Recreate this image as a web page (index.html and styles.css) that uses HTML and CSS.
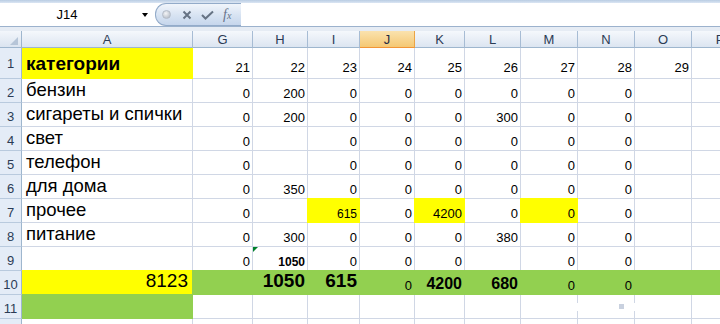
FILE: index.html
```html
<!DOCTYPE html>
<html lang="ru">
<head>
    <meta charset="UTF-8">
    <title>Расходы</title>
    <link rel="stylesheet" href="styles.css">
</head>
<body>
    <div class="topedge"></div>
    <div class="fbar">
        <div class="namebox">
            <span class="ref">J14</span>
            <span class="drop"></span>
        </div>
        <div class="fbtns">
            <span class="dot"></span>
            <svg class="ico" width="10" height="10" viewBox="0 0 10 10"><path d="M1.5 1.5L8.5 8.5M8.5 1.5L1.5 8.5"/></svg>
            <svg class="ico" width="13" height="10" viewBox="0 0 13 10"><path d="M1 5L4.5 8.5L12 1.5"/></svg>
            <span class="fx">f<span>x</span></span>
        </div>
        <div class="finput"></div>
    </div>
    <div class="fgap"></div>

    <div class="sheet">
        <div class="row head">
            <div class="corner"></div>
            <div class="ch">A</div>
            <div class="ch">G</div>
            <div class="ch">H</div>
            <div class="ch">I</div>
            <div class="ch sel">J</div>
            <div class="ch">K</div>
            <div class="ch">L</div>
            <div class="ch">M</div>
            <div class="ch">N</div>
            <div class="ch">O</div>
            <div class="ch">P</div>
        </div>

        <div class="row r1">
            <div class="rh">1</div>
            <div class="c a t b fill yel">категории</div>
            <div class="c">21</div><div class="c">22</div><div class="c">23</div><div class="c">24</div>
            <div class="c">25</div><div class="c">26</div><div class="c">27</div><div class="c">28</div>
            <div class="c">29</div><div class="c"></div>
        </div>

        <div class="row">
            <div class="rh">2</div>
            <div class="c a t">бензин</div>
            <div class="c">0</div><div class="c">200</div><div class="c">0</div><div class="c">0</div>
            <div class="c">0</div><div class="c">0</div><div class="c">0</div><div class="c">0</div>
            <div class="c"></div><div class="c"></div>
        </div>

        <div class="row">
            <div class="rh">3</div>
            <div class="c a t">сигареты и спички</div>
            <div class="c">0</div><div class="c">200</div><div class="c">0</div><div class="c">0</div>
            <div class="c">0</div><div class="c">300</div><div class="c">0</div><div class="c">0</div>
            <div class="c"></div><div class="c"></div>
        </div>

        <div class="row">
            <div class="rh">4</div>
            <div class="c a t">свет</div>
            <div class="c">0</div><div class="c"></div><div class="c">0</div><div class="c">0</div>
            <div class="c">0</div><div class="c">0</div><div class="c">0</div><div class="c">0</div>
            <div class="c"></div><div class="c"></div>
        </div>

        <div class="row">
            <div class="rh">5</div>
            <div class="c a t">телефон</div>
            <div class="c">0</div><div class="c"></div><div class="c">0</div><div class="c">0</div>
            <div class="c">0</div><div class="c">0</div><div class="c">0</div><div class="c">0</div>
            <div class="c"></div><div class="c"></div>
        </div>

        <div class="row">
            <div class="rh">6</div>
            <div class="c a t">для дома</div>
            <div class="c">0</div><div class="c">350</div><div class="c">0</div><div class="c">0</div>
            <div class="c">0</div><div class="c">0</div><div class="c">0</div><div class="c">0</div>
            <div class="c"></div><div class="c"></div>
        </div>

        <div class="row">
            <div class="rh">7</div>
            <div class="c a t">прочее</div>
            <div class="c">0</div><div class="c"></div><div class="c sm fill yel">615</div><div class="c">0</div>
            <div class="c fill yel">4200</div><div class="c">0</div><div class="c fill yel">0</div><div class="c">0</div>
            <div class="c"></div><div class="c"></div>
        </div>

        <div class="row">
            <div class="rh">8</div>
            <div class="c a t">питание</div>
            <div class="c">0</div><div class="c">300</div><div class="c">0</div><div class="c">0</div>
            <div class="c">0</div><div class="c">380</div><div class="c">0</div><div class="c">0</div>
            <div class="c"></div><div class="c"></div>
        </div>

        <div class="row">
            <div class="rh">9</div>
            <div class="c a t"></div>
            <div class="c">0</div><div class="c sm b flag">1050</div><div class="c">0</div><div class="c">0</div>
            <div class="c">0</div><div class="c"></div><div class="c">0</div><div class="c">0</div>
            <div class="c"></div><div class="c"></div>
        </div>

        <div class="row">
            <div class="rh">10</div>
            <div class="c a big fill yel">8123</div>
            <div class="c fill grn"></div><div class="c big b fill grn">1050</div><div class="c big b fill grn">615</div><div class="c fill grn">0</div>
            <div class="c mid b fill grn">4200</div><div class="c mid b fill grn">680</div><div class="c fill grn">0</div><div class="c fill grn">0</div>
            <div class="c fill grn"></div><div class="c fill grn"></div>
        </div>

        <div class="row">
            <div class="rh">11</div>
            <div class="c a fill grn"></div>
            <div class="c"></div><div class="c"></div><div class="c"></div><div class="c"></div>
            <div class="c"></div><div class="c"></div><div class="c"></div><div class="c"></div>
            <div class="c"></div><div class="c"></div>
        </div>

        <div class="row">
            <div class="rh"></div>
            <div class="c a"></div>
            <div class="c"></div><div class="c"></div><div class="c"></div><div class="c"></div>
            <div class="c"></div><div class="c"></div><div class="c"></div><div class="c"></div>
            <div class="c"></div><div class="c"></div>
        </div>
    </div>

    <div class="handle"><span></span></div>
</body>
</html>
```

FILE: styles.css
```css
body {
    margin: 0;
    width: 720px;
    height: 324px;
    overflow: hidden;
    position: relative;
    background: #fff;
    font-family: "Liberation Sans", Arial, sans-serif;
    color: #000;
}

/* formula bar */
.topedge {
    height: 3px;
    background: linear-gradient(#b9cce3, #dbe6f3);
}
.fbar {
    display: flex;
    height: 23px;
    background: #fff;
    border-bottom: 1px solid #9cb2cd;
}
.namebox {
    display: flex;
    align-items: center;
    width: 155px;
}
.ref {
    width: 134px;
    text-align: center;
    font-size: 13px;
}
.drop {
    margin-left: 8px;
    width: 0;
    height: 0;
    border-left: 3.5px solid transparent;
    border-right: 3.5px solid transparent;
    border-top: 4px solid #000;
    margin-top: 1px;
}
.fbtns {
    display: flex;
    align-items: center;
    width: 86px;
    height: 23px;
    box-sizing: border-box;
    border: 1px solid #93abc9;
    border-right: none;
    border-radius: 11px 0 0 11px;
    background: linear-gradient(#f1f5fb, #d7e3f2 55%, #c6d6ec);
}
.dot {
    width: 9px;
    height: 9px;
    margin-left: 6px;
    border-radius: 50%;
    background: radial-gradient(circle at 40% 35%, #f4f5f7, #aab2be);
    border: 1px solid #b4bcc8;
    box-sizing: border-box;
}
.ico {
    margin-left: 11px;
}
.ico path {
    fill: none;
    stroke: #667384;
    stroke-width: 2;
}
.ico + .ico {
    margin-left: 9px;
}
.fx {
    margin-left: 9px;
    font-family: "Liberation Serif", serif;
    font-style: italic;
    font-size: 14px;
    color: #66738a;
}
.fx span {
    font-size: 10px;
}
.finput {
    flex: 1;
    background: #fff;
}
.fgap {
    height: 4px;
    background: #e6ecf4;
}

/* sheet */
.row {
    display: grid;
    grid-template-columns: 22px 171px 60px 55px 52px 55px 50px 56px 57px 57px 57px 57px;
    width: 749px;
    height: 24px;
}
.row.head {
    height: 17px;
}
.row.r1 {
    height: 31px;
}
.corner {
    position: relative;
    background: linear-gradient(#f3f6fb, #dbe4f0);
    border-right: 1px solid #9eb6ce;
    border-bottom: 1px solid #9eb6ce;
}
.corner::after {
    content: "";
    position: absolute;
    right: 3px;
    bottom: 2px;
    border-left: 8px solid transparent;
    border-bottom: 8px solid #b6c5d8;
}
.ch {
    display: flex;
    align-items: center;
    justify-content: center;
    background: linear-gradient(#f5f8fc, #dce5f1);
    border-right: 1px solid #a7bcd4;
    border-bottom: 1px solid #9eb6ce;
    font-size: 13px;
    color: #2b3b55;
}
.ch.sel {
    background: linear-gradient(#fae2ae, #f5c873);
    border-right-color: #eba445;
    border-bottom: 1px solid #f29536;
    color: #1f2d44;
}
.rh {
    display: flex;
    align-items: center;
    justify-content: center;
    padding-top: 3px;
    background: #e4ecf7;
    border-right: 1px solid #9eb6ce;
    border-bottom: 1px solid #b9cade;
    font-size: 13px;
    color: #2b3b55;
}
.r1 .rh {
    padding-top: 0;
}

.c {
    position: relative;
    display: flex;
    align-items: flex-end;
    justify-content: flex-end;
    padding: 0 2px 1px 0;
    border-right: 1px solid #d0d7e5;
    border-bottom: 1px solid #d0d7e5;
    font-size: 13px;
    white-space: nowrap;
    overflow: hidden;
}
.r1 .c {
    padding-bottom: 3px;
}
.c.t {
    justify-content: flex-start;
    padding-left: 4px;
    font-size: 18.5px;
}
.c.t.b {
    font-size: 19px;
}
.b {
    font-weight: bold;
}
.c.sm {
    font-size: 12px;
}
.c.mid {
    font-size: 16px;
}
.c.big {
    font-size: 19px;
    padding-bottom: 2px;
}
.c.a.big {
    padding-right: 4px;
}

/* filled cells cover the gridlines around them */
.yel {
    --f: #ffff00;
}
.grn {
    --f: #92d050;
}
.fill {
    background: var(--f);
    border-color: var(--f);
    box-shadow: -1px 0 0 var(--f), 0 -1px 0 var(--f), -1px -1px 0 var(--f);
}
.fill.a {
    box-shadow: 0 -1px 0 var(--f);
}
.r1 .fill {
    box-shadow: none;
}

.flag::before {
    content: "";
    position: absolute;
    top: 0;
    left: 0;
    border-top: 5px solid #00802b;
    border-right: 5px solid transparent;
}

.handle {
    position: absolute;
    left: 576px;
    top: 303px;
    width: 60px;
    height: 8px;
    background: #fff;
}
.handle span {
    position: absolute;
    left: 43px;
    top: 1px;
    width: 5px;
    height: 5px;
    background: #c9d1df;
}
```
